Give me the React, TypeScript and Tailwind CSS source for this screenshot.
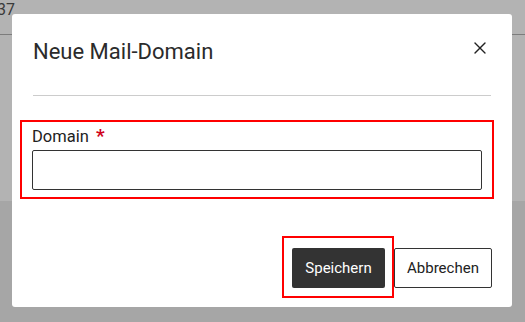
import { X } from "lucide-react";

const App = () => {
  return (
    <div className="relative w-[525px] h-[322px] overflow-hidden bg-[#b3b3b3] font-['Roboto',sans-serif]">
      {/* Page behind the overlay */}
      <div className="h-[34px] border-b border-[#7c7c7c]">
        <div className="-ml-[3px] mt-[1px] text-[16px] leading-[18px] text-[#3a3a3a]">37</div>
      </div>
      <div className="h-[166px]" />
      <div className="h-[122px] bg-[#a6a6a6]" />

      {/* Modal */}
      <div className="absolute left-[12px] top-[14px] w-[500px] h-[293px] bg-white rounded-[3px] flex flex-col">
        <div className="relative px-[21px] pt-[24px]">
          <h2 className="text-[22px] leading-[28px] text-[#2b2b2b] font-normal">Neue Mail-Domain</h2>
          <button className="absolute right-[22px] top-[24px] text-[#222]">
            <X size={20} strokeWidth={1.6} />
          </button>
          <div className="mt-[29px] h-px bg-[#cccccc]" />
        </div>

        <div className="mt-[24px] ml-[8px] w-[474px] border-2 border-[#ff0000] px-[10px] pt-[5px] pb-[7px]">
          <label className="block text-[16.5px] leading-[20px] text-[#222]">
            Domain <span className="text-[#d0021b] font-bold text-[19px] leading-[16px] ml-[3px]">*</span>
          </label>
          <input className="mt-[3px] block w-[450px] h-[40px] border border-[#333] rounded-[2px] outline-none" />
        </div>

        <div className="mt-[37px] flex justify-end items-start pr-[20px]">
          <div className="border-2 border-[#ff0000] pl-[8px] pr-[7px] pt-[10px] pb-[8px]">
            <button className="w-[93px] h-[40px] bg-[#333333] text-white text-[15px] rounded-[2px]">Speichern</button>
          </div>
          <button className="mt-[12px] w-[98px] h-[40px] bg-white border border-[#333] text-[#222] text-[15px] rounded-[2px]">
            Abbrechen
          </button>
        </div>
      </div>
    </div>
  );
};

export default App;
